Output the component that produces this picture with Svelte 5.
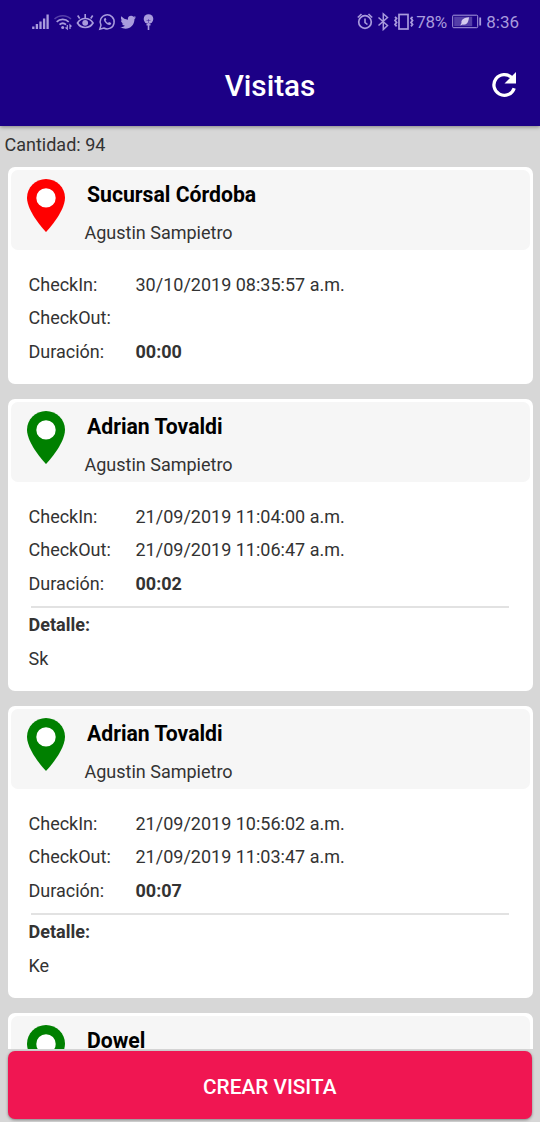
<script>
    let visitas = [
        {
            nombre: 'Sucursal Córdoba',
            usuario: 'Agustin Sampietro',
            checkIn: '30/10/2019 08:35:57 a.m.',
            checkOut: '',
            duracion: '00:00',
            detalle: '',
            abierta: true
        },
        {
            nombre: 'Adrian Tovaldi',
            usuario: 'Agustin Sampietro',
            checkIn: '21/09/2019 11:04:00 a.m.',
            checkOut: '21/09/2019 11:06:47 a.m.',
            duracion: '00:02',
            detalle: 'Sk'
        },
        {
            nombre: 'Adrian Tovaldi',
            usuario: 'Agustin Sampietro',
            checkIn: '21/09/2019 10:56:02 a.m.',
            checkOut: '21/09/2019 11:03:47 a.m.',
            duracion: '00:07',
            detalle: 'Ke'
        },
        {
            nombre: 'Dowel'
        }
    ]
    let cantidad = 94
</script>

<div class="pantalla">
    <header>
        <div class="estado">
            <svg width="125" height="20" viewBox="0 0 125 20" fill="none" stroke="currentColor">
                <!-- señal -->
                <path d="M1.300 18v-2.500M4.900 18v-5M8.500 18v-7.500M12.100 18v-10.500M15.600 18V3.500" stroke-width="2.300"/>
                <!-- wifi -->
                <path d="M22.500 8c4.500-4.500 12-4.500 16.500 0" stroke-width="1.500" opacity=".4"/>
                <path d="M24.700 10.800c3.200-3.200 8.800-3.200 12 0M27.500 13.700c2-1.800 4.500-1.800 6.500 0" stroke-width="1.700"/>
                <circle cx="30.700" cy="16.500" r="1.500" fill="currentColor" stroke="none"/>
                <path d="M35.300 14v4l-1.800-1.500M38 18v-4l1.500 1.500" stroke-width="1.200"/>
                <!-- ojo -->
                <path d="M45.500 12c3.500-6 12-6 15.500 0-3.500 6-12 6-15.500 0z" stroke-width="1.700"/>
                <circle cx="53.200" cy="11.800" r="2.900" fill="currentColor" stroke="none"/>
                <path d="M53.200 7V3M47.700 7.500l-2-3M58.700 7.500l2-3" stroke-width="1.600"/>
                <!-- whatsapp -->
                <path d="M67.800 18.200l1.200-4a7 7 0 1 1 2.800 2.800z" stroke-width="1.500"/>
                <path d="M72.300 7.500c-2 2 3.500 8 6.500 6l.5-1.400-2.300-1.100-1 1c-1-.5-1.900-1.400-2.400-2.400l.8-.9-.9-1.900z" fill="currentColor" stroke="none"/>
                <!-- twitter -->
                <path d="M104 6.200c-.6.300-1.100.4-1.800.5.6-.4 1.200-1 1.400-1.700-.7.400-1.300.6-2.100.8a3.200 3.200 0 0 0-5.500 2.900c-2.700-.1-5-1.400-6.600-3.400-.9 1.500-.4 3.300 1 4.300-.5 0-1-.1-1.500-.4 0 1.500 1.100 2.900 2.600 3.200-.5.1-1 .1-1.500.1.4 1.300 1.600 2.200 3 2.200-1.300 1.100-3 1.600-4.700 1.400 6.500 4.100 14.200-.1 14.200-8.100.6-.5 1.100-1.100 1.500-1.800z" fill="currentColor" stroke="none"/>
                <!-- globo -->
                <circle cx="116.500" cy="8" r="4.800" fill="currentColor" stroke="none"/>
                <path d="M116.500 12v7M114.500 13.700h4" stroke-width="1.600"/>
                <path d="M116.500 8v4M114.500 9.500h4" stroke="#1c0086" stroke-width=".4"/>
            </svg>
            <div class="derecha">
                <svg width="57" height="20" viewBox="0 0 57 20" fill="none" stroke="currentColor">
                    <!-- alarma -->
                    <circle cx="8" cy="11" r="6.300" stroke-width="1.700"/>
                    <path d="M8 7.500v4l2.500 2M.800 6.500l3.700-3.500M15.200 6.500l-3.700-3.500" stroke-width="1.600"/>
                    <!-- bluetooth -->
                    <path d="M21.500 6.500l9 8-4.200 4V2.800l4.200 3.700-9 8" stroke-width="1.500"/>
                    <!-- vibración -->
                    <rect x="42" y="3.500" width="9" height="14.500" stroke-width="1.700"/>
                    <path d="M38 5.800l1.600 1.600-1.600 2 1.600 2-1.600 2 1.600 2M55.600 5.800l-1.600 1.600 1.600 2-1.600 2 1.600 2-1.600 2" stroke-width="1.700"/>
                </svg>
                <span class="bateria">78%</span>
                <svg class="pila" width="30" height="15" viewBox="0 0 30 15">
                    <rect x=".7" y="1.200" width="25" height="12.500" rx="1" fill="none" stroke="currentColor" stroke-width="1"/>
                    <rect x="2.200" y="2.700" width="18" height="9.500" fill="currentColor" opacity=".4"/>
                    <path d="M17 3.200c-4.500.4-8.300 2.200-7.500 5.900L8.200 11.600l2.500-1C14.900 11.200 16.600 8 17 3.200z" fill="#d5cbef"/>
                    <path d="M28.200 3.500v8" stroke="currentColor" stroke-width="1.800"/>
                </svg>
                <span class="hora">8:36</span>
            </div>
        </div>
        <div class="barra">
            <h1>Visitas</h1>
            <button class="recargar" aria-label="Recargar">
                <svg width="28" height="28" viewBox="0 0 28 28">
                    <path d="M24.200 17.200A10.400 10.400 0 1 1 21.800 6.700" fill="none" stroke="#fff" stroke-width="3.300"/>
                    <path d="M26 1v11.500H14.500z" fill="#fff"/>
                </svg>
            </button>
        </div>
    </header>

    <main>
        <p class="cantidad">Cantidad: {cantidad}</p>
        {#each visitas as visita}
            <div class="tarjeta">
                <div class="cabecera">
                    <svg class="pin" class:abierta={visita.abierta} width="38" height="53" viewBox="0 0 38 53">
                        <path d="M19 0C8.500 0 0 8.300 0 18.700 0 33 19 53 19 53s19-20 19-34.300C38 8.300 29.500 0 19 0z"/>
                        <circle cx="19" cy="18.900" r="9.700" fill="#fff"/>
                    </svg>
                    <div>
                        <h2>{visita.nombre}</h2>
                        {#if visita.usuario}
                            <p class="usuario">{visita.usuario}</p>
                        {/if}
                    </div>
                </div>
                {#if visita.checkIn}
                    <div class="datos">
                        <span>CheckIn:</span>
                        <span>{visita.checkIn}</span>
                        <span>CheckOut:</span>
                        <span>{visita.checkOut}</span>
                        <span>Duración:</span>
                        <b>{visita.duracion}</b>
                    </div>
                {/if}
                {#if visita.detalle}
                    <div class="detalle">
                        <b>Detalle:</b>
                        <p>{visita.detalle}</p>
                    </div>
                {/if}
            </div>
        {/each}
    </main>

    <footer>
        <button class="crear">CREAR VISITA</button>
    </footer>
</div>

<style>
    :global(body){
        margin: 0;
    }
    .pantalla{
        display: flex;
        flex-direction: column;
        width: 540px;
        height: 1122px;
        overflow: hidden;
        background-color: #d7d7d7;
        color: #333;
        font-family: Roboto, sans-serif;
        font-size: 18px;
    }
    h1, h2, p{
        margin: 0;
    }
    button{
        border: 0;
        padding: 0;
        font-family: inherit;
    }
    header{
        position: relative;
        flex: none;
        height: 126px;
        background-color: #1c0086;
        box-shadow: 0 1px 4px rgba(0, 0, 0, 0.4);
    }
    .estado{
        display: flex;
        justify-content: space-between;
        align-items: center;
        height: 43px;
        padding: 0 21px 0 32px;
        color: #a99bdd;
    }
    .estado svg{
        flex: none;
        margin-top: -2px;
    }
    .derecha{
        display: flex;
        align-items: center;
        font-size: 17px;
    }
    .bateria{
        width: 32px;
        margin: 0 4px 0 2px;
        font-size: 17px;
        letter-spacing: -0.3px;
    }
    .estado .pila{
        margin-top: 0;
    }
    .hora{
        margin-left: 4px;
    }
    .barra{
        display: grid;
        grid-template-columns: 1fr auto 1fr;
        align-items: center;
        height: 83px;
        padding: 0 22px;
        color: #fff;
    }
    h1{
        grid-column: 2;
        padding-top: 2px;
        font-size: 29.700px;
        font-weight: 500;
    }
    .recargar{
        justify-self: end;
        height: 28px;
        background: none;
    }
    main{
        flex: none;
        height: 922.500px;
        overflow: hidden;
    }
    .cantidad{
        height: 41.400px;
        padding-left: 4.500px;
        line-height: 37px;
    }
    .tarjeta{
        margin: 0 7.500px 15.400px 7.500px;
        padding: 3px 3px 15.500px;
        border-radius: 7px;
        background-color: #fff;
    }
    .cabecera{
        display: flex;
        height: 79.500px;
        border-radius: 7px;
        background-color: #f6f6f6;
    }
    .pin{
        flex: none;
        margin: 9px 20px 0 16px;
        fill: #008000;
    }
    .pin.abierta{
        fill: #f00;
    }
    h2{
        padding-left: 2.500px;
        color: #000;
        font-size: 21.200px;
        font-weight: 700;
        line-height: 50px;
    }
    .usuario{
        line-height: 25.500px;
    }
    .datos{
        display: grid;
        grid-template-columns: 107px 1fr;
        grid-auto-rows: 33.500px;
        padding: 18px 18px 0 18px;
        line-height: 33.500px;
    }
    .detalle{
        padding-left: 18px;
        line-height: 33.500px;
    }
    .detalle::before{
        content: "";
        display: block;
        height: 2px;
        margin: 5.500px 21px 0.500px 2.500px;
        background-color: #e2e2e2;
    }
    footer{
        flex: 1;
        padding: 2.500px 8.500px 3.500px 8px;
    }
    .crear{
        display: block;
        width: 100%;
        height: 67.500px;
        padding-top: 4px;
        border-radius: 7px;
        background-color: #f01652;
        box-shadow: 0 1px 3px rgba(0, 0, 0, 0.4);
        color: #fff;
        font-size: 20.800px;
        font-weight: 500;
    }
</style>
